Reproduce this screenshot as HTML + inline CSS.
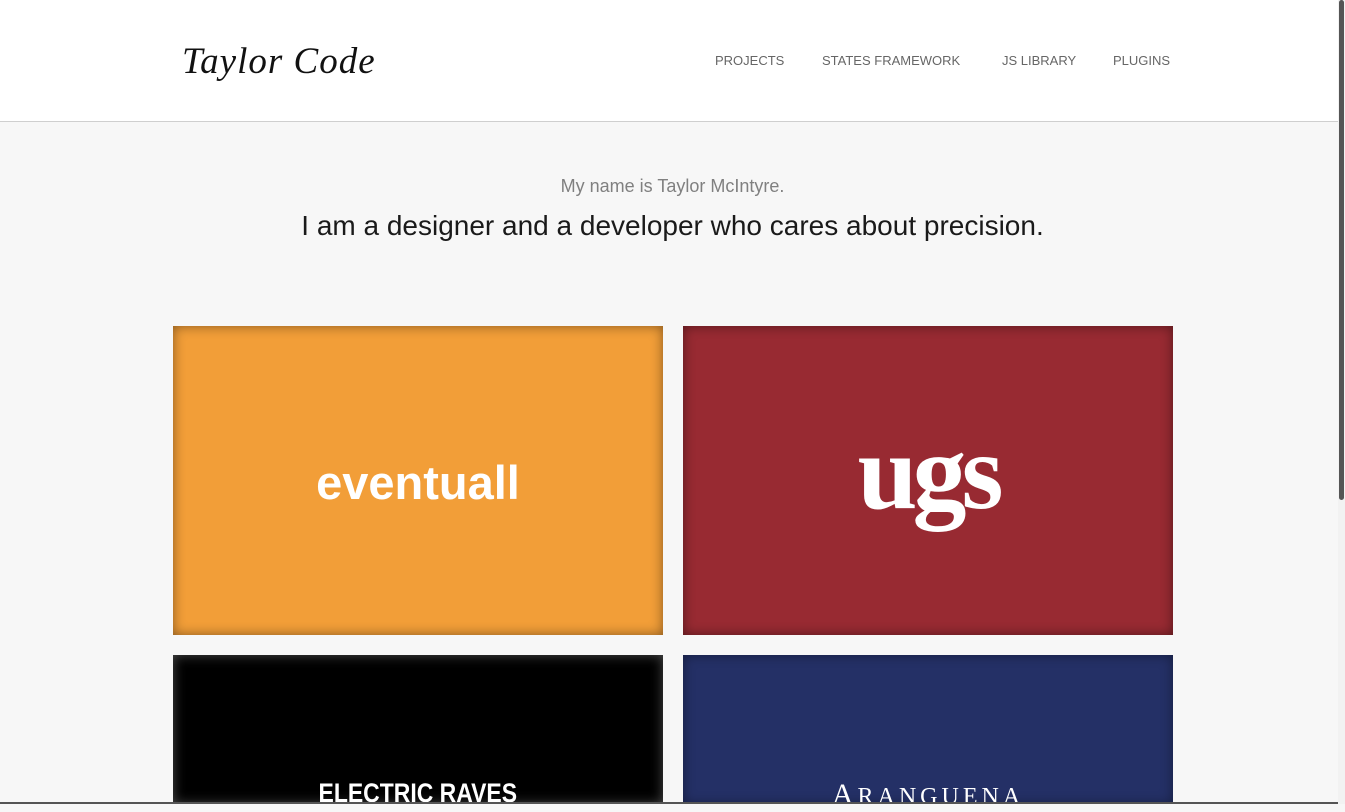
<!DOCTYPE html>
<html><head><style>
html,body{margin:0;padding:0;width:1345px;height:804px;overflow:hidden;background:#f7f7f7;font-family:"Liberation Sans",sans-serif}
header{position:absolute;left:0;top:0;width:1338px;height:121px;background:#fff;border-bottom:1px solid #cfcfcf}
.logo{position:absolute;left:182px;top:40px;font-family:"Liberation Serif",serif;font-style:italic;font-size:37px;color:#111;letter-spacing:1px}
nav a{position:absolute;top:53px;font-size:13px;color:#666;text-decoration:none}
.t1{position:absolute;top:176px;left:0;width:1345px;text-align:center;font-size:18px;color:#808080}
.t2{position:absolute;top:210px;left:0;width:1345px;text-align:center;font-size:28px;color:#1a1a1a}
.tile{position:absolute;width:490px;height:309px;display:flex;align-items:center;justify-content:center;color:#fff}
.sb{position:absolute;right:0;top:0;width:7px;height:804px;background:#f2f2f2}
.sb div{width:5px;margin-left:1px;height:500px;background:#555;border-radius:3px}
</style></head><body>
<header>
<div class="logo">Taylor Code</div>
<nav><a style="left:715px">PROJECTS</a><a style="left:822px">STATES FRAMEWORK</a><a style="left:1002px">JS LIBRARY</a><a style="left:1113px">PLUGINS</a></nav>
</header>
<div class="t1">My name is Taylor McIntyre.</div>
<div class="t2">I am a designer and a developer who cares about precision.</div>
<div class="tile" style="left:173px;top:326px;background:#f29e38;box-shadow:inset 0 0 12px rgba(0,0,0,.45)"><span style="font-size:47px;font-weight:bold;margin-top:4px">eventuall</span></div>
<div class="tile" style="left:683px;top:326px;background:#982a32;box-shadow:inset 0 0 12px rgba(0,0,0,.45)"><span style="font-family:'Liberation Serif',serif;font-size:108px;font-weight:bold;letter-spacing:-5px;margin-top:-16px">ugs</span></div>
<div class="tile" style="left:173px;top:655px;height:149px;background:#000;box-shadow:inset 0 0 12px rgba(255,255,255,.3);align-items:flex-start"><span style="font-size:27px;font-weight:bold;margin-top:123px;transform:scaleX(.85)">ELECTRIC RAVES</span></div>
<div class="tile" style="left:683px;top:655px;height:149px;background:#243066;box-shadow:inset 0 0 12px rgba(0,0,0,.4);align-items:flex-start"><span style="font-family:'Liberation Serif',serif;font-size:30px;letter-spacing:4px;margin-top:123px">A<span style="font-size:24px">RANGUENA</span></span></div>
<div style="position:absolute;left:0;top:802px;width:1338px;height:2px;background:#555"></div>
<div class="sb"><div></div></div>
</body></html>
